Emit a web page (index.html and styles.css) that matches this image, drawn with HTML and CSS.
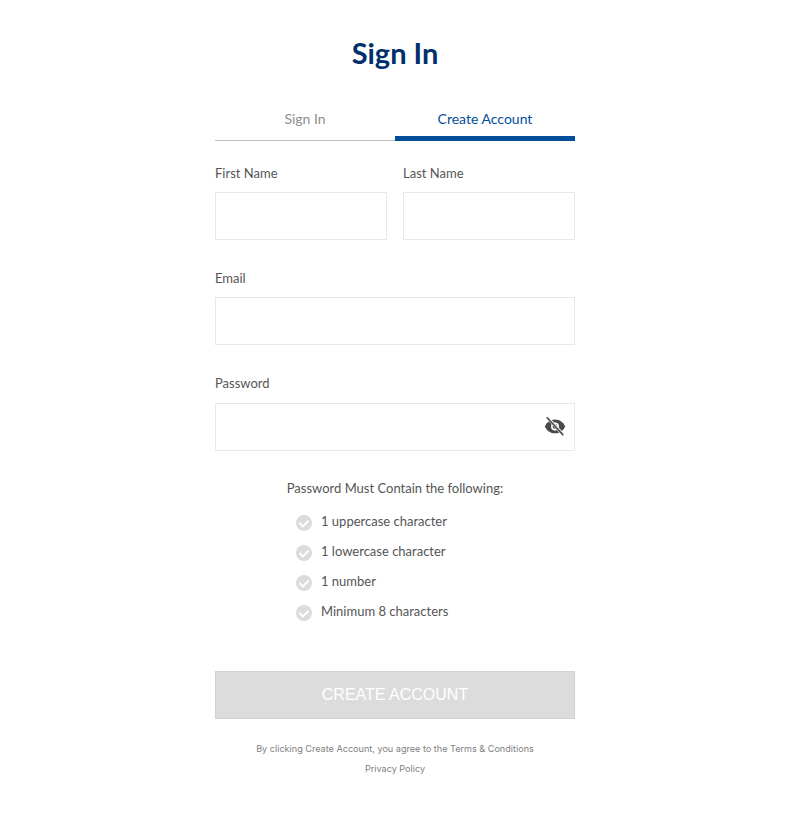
FILE: index.html
```html
<!DOCTYPE html>
<html lang="en">
<head>
    <meta charset="UTF-8">
    <meta name="viewport" content="width=device-width, initial-scale=1.0">
    <title>Sign In</title>
    <link rel="stylesheet" href="styles.css">
</head>
<body>
    <main class="account">
        <h1 class="account-title">Sign In</h1>

        <div class="tabs">
            <a class="tab" href="#">Sign In</a>
            <a class="tab tab-active" href="#">Create Account</a>
        </div>

        <form class="form">
            <div class="field-row">
                <div class="field">
                    <label for="firstName">First Name</label>
                    <input type="text" id="firstName">
                </div>
                <div class="field">
                    <label for="lastName">Last Name</label>
                    <input type="text" id="lastName">
                </div>
            </div>

            <div class="field">
                <label for="email">Email</label>
                <input type="text" id="email">
            </div>

            <div class="field">
                <label for="password">Password</label>
                <div class="password-box">
                    <input type="password" id="password">
                    <svg class="eye" viewBox="0 0 24 24" width="22" height="22">
                        <path fill="#4a4a4a" d="M12 5C7 5 2.700 8 1 12.500C2.700 17 7 20 12 20s9.300-3 11-7.500C21.300 8 17 5 12 5z"/>
                        <circle cx="12" cy="12.500" r="4.300" fill="#fff"/>
                        <circle cx="12" cy="12.500" r="2.600" fill="#4a4a4a"/>
                        <path d="M3.500 2.500l17.500 19" stroke="#fff" stroke-width="3.400"/>
                        <path d="M3 2.500l18 19.500" stroke="#4a4a4a" stroke-width="1.800"/>
                    </svg>
                </div>
            </div>

            <div class="rules">
                <p class="rules-title">Password Must Contain the following:</p>
                <ul class="rules-list">
                    <li><span class="check"></span>1 uppercase character</li>
                    <li><span class="check"></span>1 lowercase character</li>
                    <li><span class="check"></span>1 number</li>
                    <li><span class="check"></span>Minimum 8 characters</li>
                </ul>
            </div>

            <button type="button" class="submit" disabled>CREATE ACCOUNT</button>
        </form>

        <p class="legal">By clicking Create Account, you agree to the Terms &amp; Conditions</p>
        <p class="legal">Privacy Policy</p>
    </main>
</body>
</html>
```

FILE: styles.css
```css
body {
    font-family: 'Lato', sans-serif;
    background-color: #fff;
    color: #555;
    margin: 0;
    padding: 0 4px 0 0;
}

.account {
    width: 360px;
    margin: 0 auto;
    padding-top: 33px;
}

.account-title {
    color: #002f6c;
    font-size: 29px;
    line-height: 40px;
    font-weight: 700;
    text-align: center;
    margin: 0 0 25px;
}

/* Tabs */
.tabs {
    display: flex;
    height: 43px;
}

.tab {
    flex: 1;
    text-align: center;
    font-size: 14px;
    line-height: 22px;
    padding-top: 10px;
    color: #8e8e8e;
    text-decoration: none;
    border-bottom: 1px solid #bdbdbd;
    box-sizing: border-box;
}

.tab-active {
    color: #004e9a;
    border-bottom: 5px solid #004e9a;
}

/* Form */
.form {
    display: flex;
    flex-direction: column;
    gap: 28px;
    margin-top: 22px;
}

.field-row {
    display: flex;
    gap: 16px;
}

.field {
    flex: 1;
}

.field label {
    display: block;
    font-size: 13px;
    line-height: 20px;
    margin-bottom: 9px;
}

.field input {
    display: block;
    width: 100%;
    height: 48px;
    box-sizing: border-box;
    border: 1px solid #e8e8e8;
    outline: none;
    padding: 0 12px;
    font-size: 14px;
}

.password-box {
    position: relative;
    margin-top: 10px;
}

.eye {
    position: absolute;
    top: 12px;
    right: 9px;
}

/* Password rules */
.rules {
    font-size: 13px;
    margin-top: -1px;
}

.rules-title {
    text-align: center;
    line-height: 20px;
    margin: 0 0 8px;
}

.rules-list {
    list-style: none;
    margin: 0 0 0 81px;
    padding: 0;
}

.rules-list li {
    display: flex;
    align-items: center;
    gap: 9px;
    height: 30px;
}

.check {
    position: relative;
    width: 16px;
    height: 16px;
    margin-top: 3px;
    border-radius: 50%;
    background-color: #dcdcdc;
}

.check::after {
    content: "";
    position: absolute;
    left: 5px;
    top: 3px;
    width: 4px;
    height: 7px;
    border: solid #fff;
    border-width: 0 2px 2px 0;
    transform: rotate(45deg);
}

.submit {
    height: 48px;
    margin-top: 17px;
    background-color: #dcdcdc;
    border: 1px solid #d2d2d2;
    color: #fff;
    font-family: 'Liberation Sans', sans-serif;
    font-size: 16px;
}

/* Legal text */
.legal {
    font-family: 'Inter', sans-serif;
    font-size: 9.100px;
    line-height: 20px;
    color: #808080;
    text-align: center;
    margin: 0;
}

.form + .legal {
    margin-top: 20px;
}
```
